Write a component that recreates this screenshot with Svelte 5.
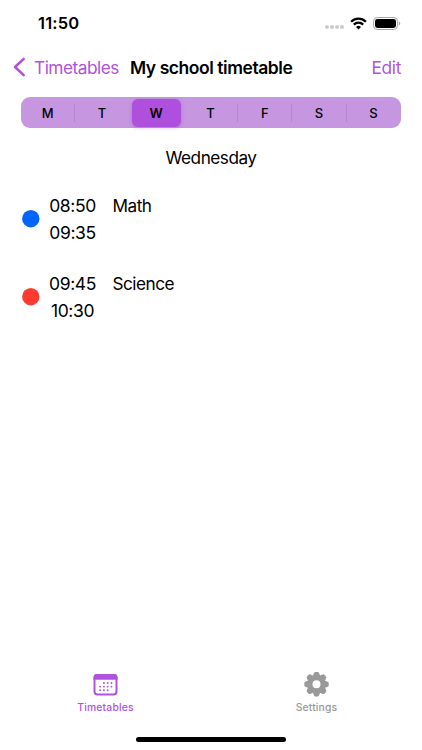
<script>
  let days = ["M", "T", "W", "T", "F", "S", "S"];
  let dayNames = [
    "Monday",
    "Tuesday",
    "Wednesday",
    "Thursday",
    "Friday",
    "Saturday",
    "Sunday",
  ];
  let selected = 2;

  let lessons = [
    { start: "08:50", end: "09:35", name: "Math", color: "#0265fe" },
    { start: "09:45", end: "10:30", name: "Science", color: "#ff3b30" },
  ];

  // Dots on the calendar icon
  let dots = [
    [11.4, 9.6], [15.2, 9.6], [19, 9.6],
    [7.6, 13.2], [11.4, 13.2], [15.2, 13.2], [19, 13.2],
    [7.6, 16.8], [11.4, 16.8], [15.2, 16.8],
  ];
  let teeth = [0, 45, 90, 135, 180, 225, 270, 315];

  // No divider next to the selected day
  function hasDivider(i) {
    return i < days.length - 1 && i !== selected && i + 1 !== selected;
  }
</script>

<div class="screen">
  <div class="status">
    <span class="clock">11:50</span>
    <div class="indicators">
      <svg class="signal" width="20" height="4" viewBox="0 0 20 4">
        {#each [2, 7, 12, 17] as x}
          <rect x={x - 1.8} y="0.2" width="3.6" height="3.6" rx="1.2" />
        {/each}
      </svg>
      <svg class="wifi" width="17" height="13" viewBox="0 0 17 13">
        <path d="M1.1 4.7A10.6 10.6 0 0 1 15.9 4.7" />
        <path d="M3.8 7.6A6.8 6.8 0 0 1 13.2 7.6" />
        <path class="tip" d="M8.5 12.4L6 9.9A3.6 3.6 0 0 1 11 9.9Z" />
      </svg>
      <svg width="28" height="13" viewBox="0 0 28 13">
        <rect class="case" x="0.5" y="0.5" width="24" height="12" rx="3.8" />
        <rect x="2" y="2" width="21" height="9" rx="2.4" />
        <path class="cap" d="M25.8 4.4Q27.2 5 27.2 6.5T25.8 8.6Z" />
      </svg>
    </div>
  </div>

  <header>
    <button class="back">
      <svg width="13" height="20" viewBox="0 0 13 20">
        <path d="M10.7 1.8L2 10L10.7 18.2" />
      </svg>
      <span>Timetables</span>
    </button>
    <h1>My school timetable</h1>
    <button class="edit">Edit</button>
  </header>

  <div class="segments">
    {#each days as day, i}
      <button
        class="segment"
        class:active={i === selected}
        class:divider={hasDivider(i)}
        on:click={() => (selected = i)}
      >
        <span>{day}</span>
      </button>
    {/each}
  </div>

  <h2>{dayNames[selected]}</h2>

  <ul>
    {#each lessons as lesson}
      <li>
        <svg class="dot" width="18" height="18" viewBox="0 0 18 18">
          <circle cx="8.8" cy="8.7" r="8.7" fill={lesson.color} />
        </svg>
        <div class="times">
          <span>{lesson.start}</span>
          <span>{lesson.end}</span>
        </div>
        <span class="name">{lesson.name}</span>
      </li>
    {/each}
  </ul>

  <nav>
    <button class="tab current">
      <svg width="26" height="24" viewBox="0.5 0.2 26 24">
        <rect class="frame" x="2" y="2.2" width="22" height="19.4" rx="3" />
        <path d="M1 7V4.6Q1 1.2 4.4 1.2H21.6Q25 1.2 25 4.6V7Z" />
        {#each dots as [x, y]}
          <circle cx={x} cy={y + 0.6} r="0.95" />
        {/each}
      </svg>
      <span>Timetables</span>
    </button>
    <button class="tab">
      <svg width="26" height="24" viewBox="-12.5 -11.2 26 24">
        <circle class="ring" r="6.5" />
        {#each teeth as angle}
          <path
            d="M-3.8 -8L-2.5 -11.2Q-2.1 -12.2 -1.2 -12.2H1.2Q2.1 -12.2 2.5 -11.2L3.8 -8Z"
            transform="rotate({angle})"
          />
        {/each}
      </svg>
      <span>Settings</span>
    </button>
  </nav>

  <div class="home"></div>
</div>

<style>
  :global(body) {
    background: #fff;
  }

  .screen {
    width: 422px;
    height: 750px;
    display: flex;
    flex-direction: column;
    overflow: hidden;
    background: #fff;
    color: #000;
    font-family: Inter, "Liberation Sans", sans-serif;
  }

  button {
    border: none;
    background: none;
    padding: 0;
    margin: 0;
    font-family: inherit;
    color: inherit;
  }

  .status {
    height: 47px;
    flex: none;
    display: flex;
    justify-content: space-between;
    padding: 0 21px 0 38px;
    box-sizing: border-box;
  }

  .clock {
    font-size: 16.5px;
    font-weight: 600;
    line-height: 47px;
    letter-spacing: 0.15px;
  }

  .indicators {
    display: flex;
    height: 46px;
    align-items: center;
  }

  .signal {
    fill: #c9c9c9;
    margin: 8px 5px 0 0;
  }

  .wifi {
    margin-right: 6px;
  }

  .wifi path {
    fill: none;
    stroke: #000;
    stroke-width: 2.3;
  }

  .wifi .tip {
    fill: #000;
    stroke: none;
  }

  .case {
    fill: none;
    stroke: #a6a6a6;
  }

  .cap {
    fill: #a6a6a6;
  }

  header {
    height: 40px;
    flex: none;
    display: flex;
    align-items: center;
    padding: 0 21px 0 12.5px;
    font-size: 17.5px;
    white-space: nowrap;
  }

  .back {
    display: flex;
    align-items: center;
    gap: 8.5px;
    width: 117.5px;
    color: #af52de;
    font-size: 17.3px;
    letter-spacing: -0.5px;
  }

  .back path {
    fill: none;
    stroke: currentColor;
    stroke-width: 2.5;
    stroke-linecap: round;
    stroke-linejoin: round;
  }

  h1 {
    margin: 0;
    font-size: 17.5px;
    font-weight: 600;
    letter-spacing: -0.45px;
  }

  .edit {
    margin-left: auto;
    color: #af52de;
    font-size: 17.3px;
    letter-spacing: -0.3px;
  }

  .segments {
    display: grid;
    grid-template-columns: repeat(7, 1fr);
    flex: none;
    height: 31px;
    margin: 10px 21px 0;
    border-radius: 9px;
    background: #c697e0;
  }

  .segment {
    position: relative;
    display: flex;
    padding: 2px 3px 2px 2px;
    font-size: 13px;
    font-weight: 500;
  }

  .segment span {
    flex: 1;
    height: 27px;
    line-height: 28px;
    border-radius: 6px;
  }

  .segment.active {
    font-weight: 600;
  }

  .segment.active span {
    height: 28px;
    background: #af4fdd;
    box-shadow: 0 1px 4px rgba(80, 0, 120, 0.2);
  }

  .segment.divider::after {
    content: "";
    position: absolute;
    right: 0;
    top: 7px;
    width: 1px;
    height: 18px;
    background: #b585d0;
  }

  h2 {
    flex: none;
    margin: 18px 0 0;
    text-align: center;
    font-size: 17.2px;
    font-weight: 400;
    line-height: 24px;
    letter-spacing: -0.5px;
  }

  ul {
    flex: 1;
    list-style: none;
    margin: 10px 0 0;
    padding: 0 22px;
  }

  li {
    display: flex;
    height: 78px;
    align-items: center;
    font-size: 17.5px;
    line-height: 27px;
    letter-spacing: -0.38px;
  }

  .dot {
    flex: none;
  }

  .times {
    display: flex;
    flex-direction: column;
    align-items: center;
    width: 48px;
    margin: 0 16px 0 8.5px;
  }

  .name {
    align-self: flex-start;
    margin-top: 12px;
    font-size: 17.2px;
    letter-spacing: -0.5px;
  }

  nav {
    display: grid;
    grid-template-columns: 1fr 1fr;
    flex: none;
    height: 64px;
  }

  .tab {
    display: flex;
    flex-direction: column;
    align-items: center;
    gap: 4px;
    color: #999;
    font-size: 10.4px;
    font-weight: 500;
    line-height: 14px;
    letter-spacing: 0.15px;
  }

  .tab svg {
    fill: currentColor;
    overflow: visible;
  }

  .tab.current {
    color: #af52de;
  }

  .frame,
  .ring {
    fill: none;
    stroke: currentColor;
  }

  .frame {
    stroke-width: 2;
  }

  .ring {
    stroke-width: 5;
  }

  .home {
    flex: none;
    width: 150px;
    height: 5px;
    margin: 0 auto 8.5px;
    border-radius: 3px;
    background: #000;
  }
</style>
